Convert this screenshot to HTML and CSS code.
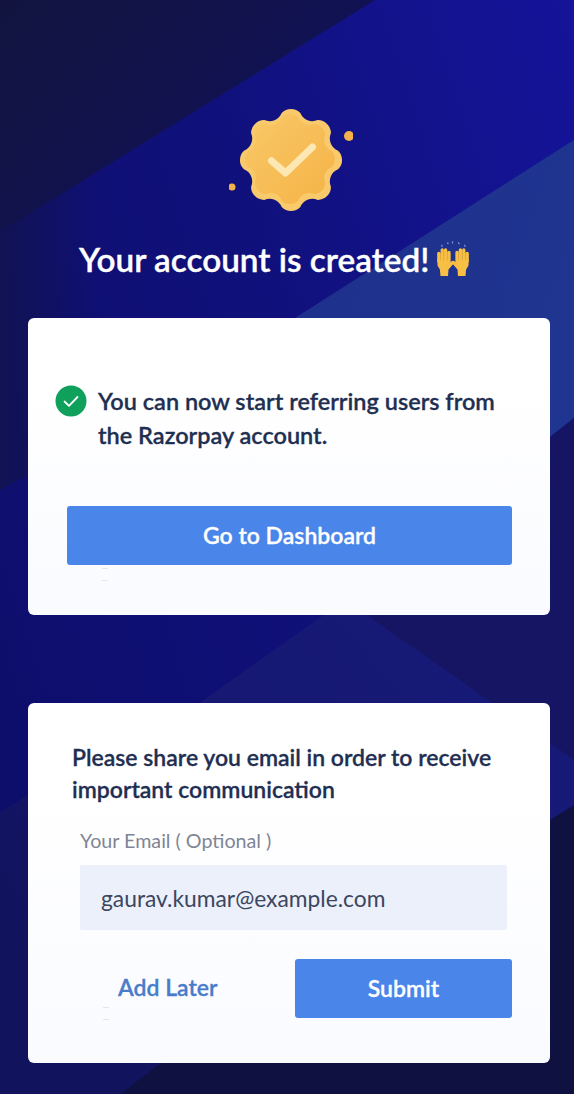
FILE: index.html
```html
<!DOCTYPE html>
<html lang="en">
<head>
<meta charset="utf-8">
<title>Your account is created</title>
<link rel="stylesheet" href="styles.css">
</head>
<body>
<svg class="backdrop" viewBox="0 0 574 1094" preserveAspectRatio="none" aria-hidden="true">
  <defs>
    <linearGradient id="base" x1="1" y1="0" x2="0" y2="0.6">
      <stop offset="0" stop-color="#15149a"/>
      <stop offset="0.55" stop-color="#10107a"/>
      <stop offset="1" stop-color="#0d0e6c"/>
    </linearGradient>
    <linearGradient id="corner" x1="0" y1="0" x2="1" y2="0.6">
      <stop offset="0" stop-color="#12143f"/>
      <stop offset="1" stop-color="#10115a"/>
    </linearGradient>
    <linearGradient id="leftShade" x1="0" y1="0" x2="1" y2="0">
      <stop offset="0" stop-color="#11134e" stop-opacity=".85"/>
      <stop offset="1" stop-color="#11134e" stop-opacity="0"/>
    </linearGradient>
    <linearGradient id="band" x1="0" y1="0" x2="1" y2="0.3">
      <stop offset="0" stop-color="#1c2a88"/>
      <stop offset="1" stop-color="#1f3590"/>
    </linearGradient>
    <linearGradient id="peak" x1="1" y1="0" x2="0" y2="0.7">
      <stop offset="0" stop-color="#171a78"/>
      <stop offset="0.55" stop-color="#161872"/>
      <stop offset="1" stop-color="#11135c"/>
    </linearGradient>
  </defs>
  <rect width="574" height="1094" fill="url(#base)"/>
  <polygon points="0,0 375,0 0,232" fill="url(#corner)"/>
  <polygon points="0,232 100,170 100,420 28,475 0,490" fill="url(#leftShade)"/>
  <polygon points="574,140 574,418 345,600 28,600 28,480 295,318" fill="url(#band)"/>
  <polygon points="574,418 574,1094 300,1094 345,600" fill="#151564"/>
  <polygon points="345,600 574,760 574,805 121,1094 0,1094 0,813 28,795 187,712" fill="url(#peak)"/>
  <polygon points="574,805 574,1094 121,1094 157,1066" fill="#0f1140"/>
</svg>

<header class="hero">
  <svg class="badge" viewBox="-62 -54 124 108" aria-hidden="true">
    <defs>
      <linearGradient id="badgeFill" x1="0" y1="0" x2="1" y2="1">
        <stop offset="0" stop-color="#f8c868"/>
        <stop offset="1" stop-color="#f5b346"/>
      </linearGradient>
    </defs>
    <path fill="#f9ca6c" d="M-9.36-47.08A13 13 0 0 1 9.36-47.08A13 13 0 0 0 26.67-39.91A13 13 0 0 1 39.91-26.67A13 13 0 0 0 47.08-9.36A13 13 0 0 1 47.08 9.36A13 13 0 0 0 39.91 26.67A13 13 0 0 1 26.67 39.91A13 13 0 0 0 9.36 47.08A13 13 0 0 1 -9.36 47.08A13 13 0 0 0 -26.67 39.91A13 13 0 0 1 -39.91 26.67A13 13 0 0 0 -47.08 9.36A13 13 0 0 1 -47.08 -9.36A13 13 0 0 0 -39.91 -26.67A13 13 0 0 1 -26.67 -39.91A13 13 0 0 0 -9.36 -47.08Z"/>
    <g transform="translate(-1 -1) scale(.88)">
      <path fill="url(#badgeFill)" d="M-9.36-47.08A13 13 0 0 1 9.36-47.08A13 13 0 0 0 26.67-39.91A13 13 0 0 1 39.91-26.67A13 13 0 0 0 47.08-9.36A13 13 0 0 1 47.08 9.36A13 13 0 0 0 39.91 26.67A13 13 0 0 1 26.67 39.91A13 13 0 0 0 9.36 47.08A13 13 0 0 1 -9.36 47.08A13 13 0 0 0 -26.67 39.91A13 13 0 0 1 -39.91 26.67A13 13 0 0 0 -47.08 9.36A13 13 0 0 1 -47.08 -9.36A13 13 0 0 0 -39.91 -26.67A13 13 0 0 1 -26.67 -39.91A13 13 0 0 0 -9.36 -47.08Z"/>
    </g>
    <path d="M-19.500 .8L-5.500 13L21.500-13" fill="none" stroke="#fde8b4" stroke-width="7" stroke-linecap="round" stroke-linejoin="round"/>
    <circle cx="58" cy="-24" r="5" fill="#f5b04a"/>
    <circle cx="-59" cy="27" r="3.500" fill="#f5b04a"/>
  </svg>
  <h1 class="title">Your account is created!
    <svg class="hands" viewBox="0 0 36 36" aria-hidden="true">
      <g fill="#f8bf45">
        <path d="M2.500 18.500h12.500l.5 7-2 3-.5 6.500H5.500l-.6-6.500-2.400-4z"/>
        <path d="M33.500 18.500H21l-.5 7 2 3 .5 6.500h7.500l.6-6.500 2.400-4z"/>
      </g>
      <g fill="none" stroke="#f8bf45" stroke-width="3.300" stroke-linecap="round">
        <path d="M3.800 20.500V12.500M7.200 20.500V9M10.600 20.500V8.800M14 20.500V11.500M13.500 26l4-4.500"/>
        <path d="M32.200 20.500V12.500M28.800 20.500V9M25.400 20.500V8.800M22 20.500V11.500M22.500 26l-4-4.500"/>
      </g>
      <g fill="none" stroke="#e2a02f" stroke-width=".6" opacity=".7">
        <path d="M5.500 12v8M8.900 10v10M12.300 10v10M30.500 12v8M27.100 10v10M23.700 10v10"/>
      </g>
      <path fill="#8fa3d8" d="M6 5.500l1-2.500.8 2.800zM12 3l1-2.500.7 2.800zM17.300 3.500l-.5-3h1.600zM23 3l.8-2.500.9 2.800zM29 5.500l.8-2.500 1 2.800z"/>
    </svg>
  </h1>
</header>

<main class="stack">
  <section class="card card-status">
    <div class="status">
      <svg class="status-icon" viewBox="0 0 32 32" aria-hidden="true">
        <circle cx="16" cy="16" r="15.500" fill="#0fa05c"/>
        <path d="M9.500 16.500l4.500 4.300 8.500-8.800" fill="none" stroke="#fff" stroke-width="1.800" stroke-linecap="round" stroke-linejoin="round"/>
      </svg>
      <p class="status-text">You can now start referring users from the Razorpay account.</p>
    </div>
    <div class="action-row">
      <a class="btn btn-full" href="#">Go to Dashboard</a>
      <span class="ticks" aria-hidden="true"></span>
    </div>
  </section>

  <section class="card card-email">
    <h2 class="email-title">Please share you email in order to receive important communication</h2>
    <div class="field">
      <label class="field-label" for="email">Your Email ( Optional )</label>
      <input class="field-input" id="email" type="text" value="gaurav.kumar@example.com" readonly>
    </div>
    <div class="action-row action-split">
      <a class="link" href="#">Add Later</a>
      <a class="btn btn-submit" href="#">Submit</a>
      <span class="ticks" aria-hidden="true"></span>
    </div>
  </section>
</main>
</body>
</html>
```

FILE: styles.css
```css
* { box-sizing: border-box; }

html, body { margin: 0; padding: 0; }

body {
  position: relative;
  width: 574px;
  height: 1094px;
  overflow: hidden;
  font-family: "Lato", "Liberation Sans", sans-serif;
  background: #0f1070;
}

.backdrop {
  position: absolute;
  inset: 0;
  width: 574px;
  height: 1094px;
  z-index: 0;
}

.hero,
.stack {
  position: relative;
  z-index: 1;
}

.hero {
  display: flex;
  flex-direction: column;
  align-items: center;
  padding-top: 106px;
}

.badge {
  display: block;
  width: 124px;
  height: 108px;
  margin-left: 8px;
}

.title {
  display: flex;
  align-items: center;
  align-self: flex-start;
  gap: 6px;
  margin: 15px 0 2px 79px;
  height: 60px;
  font-size: 33.3px;
  font-weight: 600;
  -webkit-text-stroke: 0.35px #fff;
  color: #fff;
  white-space: nowrap;
}

.hands {
  width: 36px;
  height: 36px;
  flex: none;
}

.stack {
  display: flex;
  flex-direction: column;
  gap: 88px;
  margin-top: 27px;
  padding: 0 24px 0 28px;
}

.card {
  background: linear-gradient(180deg, #ffffff 20%, #fafbff 100%);
  border-radius: 6px;
}

.card-status {
  height: 297px;
  padding: 66px 38px 0 27px;
}

.status {
  display: flex;
  align-items: flex-start;
  gap: 11px;
}

.status-icon {
  width: 32px;
  height: 32px;
  flex: none;
  margin-top: 1px;
}

.status-text {
  margin: 0;
  font-size: 23.5px;
  font-weight: 600;
  -webkit-text-stroke: 0.3px #1f2f52;
  line-height: 34px;
  color: #1f2f52;
}

.action-row {
  position: relative;
}

.card-status .action-row {
  margin: 54px 0 0 12px;
}

.btn {
  display: flex;
  align-items: center;
  justify-content: center;
  height: 59px;
  padding-bottom: 2px;
  background: #4a85ea;
  border-radius: 3px;
  font-size: 23px;
  font-weight: 600;
  -webkit-text-stroke: 0.3px #fff;
  color: #fff;
  text-decoration: none;
}

.ticks {
  position: absolute;
  left: 35px;
  top: 62px;
  width: 6px;
  height: 13px;
  border-top: 1px solid #e4e6eb;
  border-bottom: 1px solid #e4e6eb;
}

.card-email {
  height: 360px;
  padding: 38px 38px 0 44px;
}

.email-title {
  margin: 0;
  font-size: 23px;
  font-weight: 600;
  -webkit-text-stroke: 0.3px #1f2f52;
  line-height: 32px;
  color: #1f2f52;
}

.field {
  margin: 10px 5px 0 8px;
}

.field-label {
  display: block;
  height: 50px;
  line-height: 52px;
  font-size: 19.7px;
  color: #7f8595;
}

.field-input {
  display: block;
  width: 427px;
  height: 65px;
  padding: 0 21px;
  border: 0;
  border-radius: 2px;
  outline: 0;
  background: #ebf0fa;
  font-family: inherit;
  font-size: 22.8px;
  color: #3c4660;
}

.action-split {
  display: flex;
  align-items: center;
  justify-content: space-between;
  margin: 29px 0 0 46px;
}

.action-split .ticks {
  left: -15px;
  top: 48px;
}

.link {
  padding-bottom: 3px;
  font-size: 23px;
  font-weight: 600;
  -webkit-text-stroke: 0.3px #4a7cc9;
  color: #4a7cc9;
  text-decoration: none;
}

.btn-submit {
  width: 217px;
}
```
